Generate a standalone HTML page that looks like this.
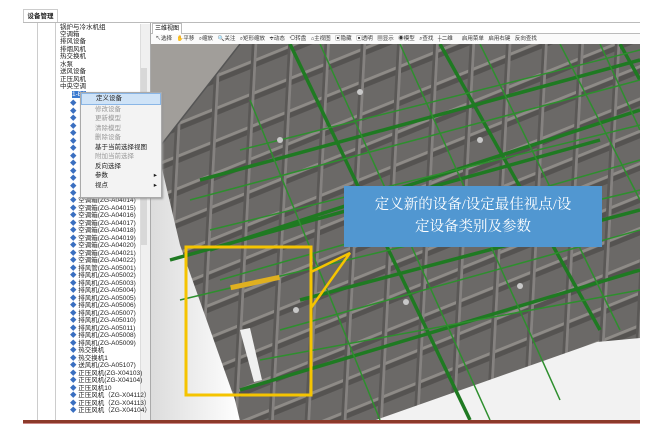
<!DOCTYPE html>
<html><head><meta charset="utf-8"><style>
body{margin:0;width:645px;height:444px;background:#fff;overflow:hidden;position:relative;font-family:"Liberation Sans","Noto Sans CJK SC",sans-serif}
.abs{position:absolute}
.tree div{position:absolute;font-size:6.5px;line-height:7px;color:#222;white-space:nowrap}
.menu div{height:9.5px;line-height:9.5px;padding-left:14px;font-size:6.5px;color:#222}
.menu .g{color:#999}
</style></head><body>
<div class="abs" style="left:23px;top:9px;width:33px;height:13px;border:1px solid #ccc;border-bottom:none;font-size:6.5px;line-height:13px;text-align:center;font-weight:bold;color:#222;background:#fff">设备管理</div>
<div class="abs" style="left:23px;top:22px;width:617px;height:1px;background:#bbb"></div>
<div class="abs" style="left:37px;top:23px;width:1px;height:398px;background:#ccc"></div>
<div class="abs" style="left:55px;top:23px;width:1px;height:398px;background:#ccc"></div>
<div class="abs" style="left:140px;top:24px;width:9px;height:396px;background:#f0f0f0;border-left:1px solid #ddd"></div>
<div class="abs" style="left:141px;top:68px;width:6px;height:50px;background:#d8d8d8"></div>
<div class="abs" style="left:141px;top:195px;width:6px;height:50px;background:#d8d8d8"></div>
<div class="abs" style="left:150px;top:23px;width:1px;height:398px;background:#aaa"></div>
<div class="tree">
<div style="left:60px;top:24px">锅炉与冷水机组</div>
<div style="left:60px;top:31px">空调箱</div>
<div style="left:60px;top:38px">排风设备</div>
<div style="left:60px;top:46px">排烟风机</div>
<div style="left:60px;top:53px">热交换机</div>
<div style="left:60px;top:61px">水泵</div>
<div style="left:60px;top:68px">送风设备</div>
<div style="left:60px;top:76px">正压风机</div>
<div style="left:60px;top:83px">中央空调</div>
<div style="left:72px;top:91px;background:#3a7ad0;color:#fff">1-B1</div>
</div>
<div class="tree" id="t2"></div>
<div class="abs" style="left:151px;top:23px;width:489px;height:10px;background:#fff;border-bottom:1px solid #bbb"></div>
<div class="abs" style="left:152px;top:23px;width:28px;height:10px;border:1px solid #bbb;border-bottom:none;font-size:6px;line-height:10px;text-align:center;background:#fff">三维视图</div>
<div class="abs" style="left:151px;top:34px;width:489px;height:10px;font-size:5.5px;line-height:10px;color:#333;white-space:nowrap;background:#fafafa;word-spacing:3px">&nbsp;↖选择 ✋平移 ⌕缩放 🔍关注 ⌕矩形缩放 ✥动态 ⟲转盘 ⌂主视图 ▣隐藏 ▣透明 ▦显示 ◉模型 ⌕查找 ┼二维 &nbsp;启用菜单 启用右键 反向查找</div>
<svg class="abs" style="left:151px;top:44px" width="489" height="377" viewBox="151 44 489 377">
<defs>
<linearGradient id="lw" x1="0" y1="0" x2="1" y2="0"><stop offset="0" stop-color="#dcdcdc"/><stop offset="1" stop-color="#fff"/></linearGradient>
<pattern id="cells" width="40" height="30" patternUnits="userSpaceOnUse" patternTransform="rotate(-22) skewX(-25)">
<rect width="40" height="30" fill="#6b6967"/>
<rect x="0" y="0" width="40" height="3" fill="#8e8b87"/>
<rect x="0" y="3" width="40" height="5" fill="#555351"/>
<rect x="0" y="0" width="3" height="30" fill="#5a5856"/>
<rect x="3" y="0" width="3" height="30" fill="#858280"/>
</pattern>
</defs>
<rect x="151" y="44" width="489" height="377" fill="url(#cells)"/>
<polygon points="151,44 240,44 151,158" fill="#a19e9a"/>
<polyline points="151,158 240,44" stroke="#555" stroke-width="1.5" fill="none"/>
<polygon points="151,165 160,160 180,245 235,400 240,421 151,421" fill="url(#lw)"/>
<polygon points="373,421 597,342 640,338 640,421" fill="#f2f2f2"/>
<g stroke="#1f7a22" stroke-width="3.5" fill="none">
<path d="M200,180 L640,60 M210,250 L640,110 M300,300 L640,210 M240,390 L640,270 M170,260 L600,140"/>
<path d="M290,44 L470,420 M440,44 L600,330 M620,44 L640,80"/>
</g>
<g stroke="#2e8f2e" stroke-width="1.5" fill="none">
<path d="M190,200 L640,80 M220,280 L640,160 M180,300 L640,190 M280,330 L640,230 M260,360 L640,290 M210,230 L640,125 M240,150 L640,50"/>
<path d="M320,44 L490,420 M400,44 L560,400 M480,44 L620,330 M560,44 L640,200 M250,100 L380,420 M600,44 L640,130"/>
</g>
<g fill="#c8c8c8"><circle cx="296" cy="310" r="3"/><circle cx="406" cy="302" r="3"/><circle cx="520" cy="286" r="3"/><circle cx="480" cy="140" r="3"/><circle cx="280" cy="140" r="3"/><circle cx="360" cy="92" r="3"/></g>
<rect x="230" y="280" width="50" height="5" fill="#e0b020" transform="rotate(-12 255 282)"/>
<polygon points="240,330 250,328 262,380 254,382" fill="#f0f0f0"/>
<rect x="186" y="247" width="125" height="148" fill="none" stroke="#f5c400" stroke-width="3"/>
<polyline points="311,272 350,253 311,308" fill="none" stroke="#f5c400" stroke-width="2.5"/>
</svg>
<div class="abs" style="left:344px;top:186px;width:258px;height:61px;background:#5197d1;color:#fff;font-family:'Liberation Serif','Noto Serif CJK SC',serif;font-size:14.5px;line-height:22px;text-align:center;padding-top:8px;box-sizing:border-box">定义新的设备/设定最佳视点/设<br>定设备类别及参数</div>
<div class="abs menu" style="left:80px;top:92px;width:80px;height:104px;background:#f3f3f3;border:1px solid #aaa;box-shadow:1px 1px 2px #999">
<div style="background:#cfe3f7;border:1px solid #8ab6e6">定义设备</div>
<div class="g">修改设备</div><div class="g">更新模型</div><div class="g">清除模型</div><div class="g">删除设备</div>
<div>基于当前选择视图</div><div class="g">附加当前选择</div><div>反向选择</div><div>参数 <span style="float:right;padding-right:4px">▸</span></div><div>视点 <span style="float:right;padding-right:4px">▸</span></div>
</div>
<div class="abs" style="left:23px;top:420px;width:617px;height:3px;background:#8c3a2a"></div>
<div class="abs" style="left:23px;top:423px;width:617px;height:1px;background:#c88"></div>
<script>
var n=["空调箱(ZG-A04014)","空调箱(ZG-A04015)","空调箱(ZG-A04016)","空调箱(ZG-A04017)","空调箱(ZG-A04018)","空调箱(ZG-A04019)","空调箱(ZG-A04020)","空调箱(ZG-A04021)","空调箱(ZG-A04022)","排风管(ZG-A05001)","排风机(ZG-A05002)","排风机(ZG-A05003)","排风机(ZG-A05004)","排风机(ZG-A05005)","排风机(ZG-A05006)","排风机(ZG-A05007)","排风机(ZG-A05010)","排风机(ZG-A05011)","排风机(ZG-A05008)","排风机(ZG-A05009)","热交换机","热交换机1","送风机(ZG-A05107)","正压风机(ZG-X04103)","正压风机(ZG-X04104)","正压风机10","正压风机（ZG-X04112）","正压风机（ZG-X04113）","正压风机（ZG-X04104）","正压风机（ZG-X04105）","正压风机（ZG-X04106）"];
var h="";for(var i=0;i<13;i++)h+='<div style="left:70px;top:'+(100+i*7.5)+'px;color:#3a6fc0">◆</div>';
for(var i=0;i<n.length;i++){var y=197+i*7.5;if(y>414)break;h+='<div style="left:70px;top:'+y+'px"><span style="color:#3a6fc0">◆</span> '+n[i]+'</div>';}
document.getElementById("t2").innerHTML=h;
</script>
</body></html>
